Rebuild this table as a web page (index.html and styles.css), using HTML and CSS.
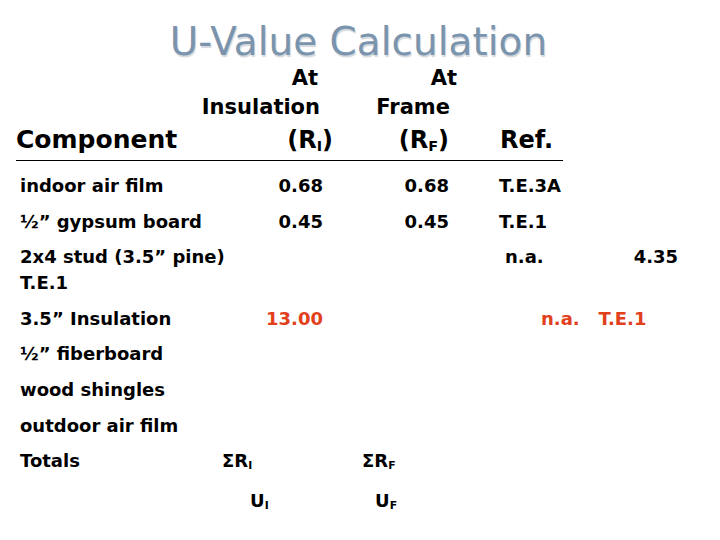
FILE: index.html
```
<html lang="en">
<head>
    <meta charset="UTF-8">
    <title>U-Value Calculation</title>
    <link rel="stylesheet" href="styles.css">
</head>
<body>
    <div class="slide">
        <h1 class="title">U-Value Calculation</h1>
        <div class="head">
            <div class="comp-head">Component</div>
            <div class="col-head">
                <span class="at-i">At</span>
                <span class="ins">Insulation</span>
                <span class="big ri">(R<sub>I</sub>)</span>
            </div>
            <div class="col-head">
                <span class="at-f">At</span>
                <span class="frame">Frame</span>
                <span class="big">(R<sub>F</sub>)</span>
            </div>
            <div class="ref-head big">Ref.</div>
        </div>
        <div class="rows">
            <div class="row">
                <div>indoor air film</div>
                <div class="num">0.68</div>
                <div class="num">0.68</div>
                <div class="ref">T.E.3A</div>
            </div>
            <div class="row">
                <div>½” gypsum board</div>
                <div class="num">0.45</div>
                <div class="num">0.45</div>
                <div class="ref">T.E.1</div>
            </div>
            <div class="row">
                <div>2x4 stud (3.5” pine) T.E.1</div>
                <div></div>
                <div></div>
                <div class="ref odd">
                    <span class="na">n.a.</span>
                    <span class="val">4.35</span>
                </div>
            </div>
            <div class="row">
                <div>3.5” Insulation</div>
                <div class="num red">13.00</div>
                <div></div>
                <div class="ref red shifted">n.a.&nbsp;&nbsp; T.E.1</div>
            </div>
            <div class="row"><div>½” fiberboard</div></div>
            <div class="row"><div>wood shingles</div></div>
            <div class="row"><div>outdoor air film</div></div>
            <div class="row">
                <div>Totals</div>
                <div class="sum-i">ΣR<sub>I</sub></div>
                <div class="sum-f">ΣR<sub>F</sub></div>
            </div>
            <div class="row last">
                <div></div>
                <div class="u-i">U<sub>I</sub></div>
                <div class="u-f">U<sub>F</sub></div>
            </div>
        </div>
    </div>
</body>
</html>
```
FILE: styles.css
```
body {
    margin: 0;
    background: #fff;
    color: #000;
    font-family: 'DejaVu Sans', sans-serif;
}
.slide {
    width: 720px;
    height: 540px;
    overflow: hidden;
}
.title {
    margin: 17px 0 0;
    text-align: center;
    font-size: 39px;
    line-height: 49px;
    font-weight: normal;
    color: #7b94ad;
    text-shadow: 1px 2px 1px #d4d9de;
    padding-right: 3px;
}
.head {
    display: grid;
    grid-template-columns: 230px 73px 126px 1fr;
    align-items: end;
    margin: -2px 157px 0 16px;
    padding: 0 0 2px 4px;
    border-bottom: 1px solid #000;
    font-weight: bold;
    font-size: 21px;
}
.comp-head {
    font-size: 25px;
    line-height: 36px;
    margin-left: -4px;
}
.col-head {
    display: flex;
    flex-direction: column;
    align-items: flex-end;
    line-height: 29px;
}
.big {
    font-size: 24px;
    line-height: 36px;
}
.at-i { margin-right: 5px; }
.ins { margin-right: 3px; }
.ri { margin-right: -10px; }
.at-f { margin-right: -8px; }
.frame { margin-right: -1px; }
.ref-head {
    padding-left: 51px;
}
sub {
    font-size: 0.6em;
    vertical-align: -0.2em;
    line-height: 0;
}
.rows {
    display: flex;
    flex-direction: column;
    gap: 9.6px;
    padding: 12px 0 0 20px;
}
.row {
    display: grid;
    grid-template-columns: 230px 73px 126px 1fr;
    font-weight: bold;
    font-size: 18px;
    line-height: 26px;
}
.row.last {
    margin-top: 4px;
}
.num {
    text-align: right;
}
.ref {
    padding-left: 50px;
}
.ref.odd {
    display: flex;
    padding-left: 56px;
}
.ref.odd .val {
    margin-left: 90px;
}
.ref.shifted {
    padding-left: 92px;
}
.red {
    color: #e2401b;
}
.sum-i {
    margin-left: -28px;
}
.sum-f {
    padding-left: 39px;
}
.u-f {
    padding-left: 52px;
}
```
